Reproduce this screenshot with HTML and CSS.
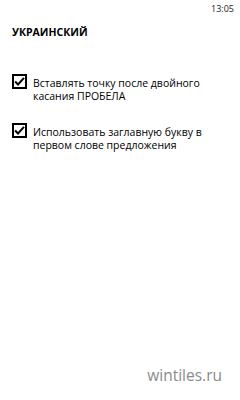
FILE: index.html
```html
<!DOCTYPE html>
<html lang="ru">
<head>
    <meta charset="UTF-8">
    <meta name="viewport" content="width=device-width, initial-scale=1.0">
    <title>Украинский</title>
    <link rel="stylesheet" href="styles.css">
</head>
<body>
    <main class="screen">
        <div class="statusbar">
            <span class="time">13:05</span>
        </div>
        <h1 class="title">УКРАИНСКИЙ</h1>

        <div class="options">
            <label class="option">
                <span class="box">
                    <svg viewBox="0 0 12 12"><path d="M1.2 6 L4.4 9.2 L10.9 2.1" fill="none" stroke="#000" stroke-width="2.2"/></svg>
                </span>
                <span class="text">Вставлять точку после двойного касания ПРОБЕЛА</span>
            </label>
            <label class="option">
                <span class="box">
                    <svg viewBox="0 0 12 12"><path d="M1.2 6 L4.4 9.2 L10.9 2.1" fill="none" stroke="#000" stroke-width="2.2"/></svg>
                </span>
                <span class="text">Использовать заглавную букву в первом слове предложения</span>
            </label>
        </div>

        <div class="watermark">wintiles.ru</div>
    </main>
</body>
</html>
```

FILE: styles.css
```css
* {
    margin: 0;
    box-sizing: border-box;
}
body {
    background: #fff;
    font-family: "Open Sans", "Noto Sans", sans-serif;
    color: #000;
}
.screen {
    width: 240px;
    height: 400px;
    display: flex;
    flex-direction: column;
}
.statusbar {
    height: 16px;
    display: flex;
    justify-content: flex-end;
    align-items: center;
    padding-right: 6px;
}
.time {
    font-size: 9px;
    color: #222;
}
.title {
    font-size: 10.5px;
    font-weight: 700;
    margin: 9px 0 0 12px;
    line-height: 14px;
}
.options {
    margin-top: 35px;
    display: flex;
    flex-direction: column;
    gap: 20px;
    padding-left: 12px;
}
.option {
    display: flex;
    align-items: flex-start;
    gap: 6px;
}
.box {
    width: 15px;
    height: 15px;
    border: 2px solid #000;
    flex: none;
    display: flex;
    align-items: center;
    justify-content: center;
}
.box svg {
    width: 11px;
    height: 11px;
}
.text {
    font-size: 10.5px;
    line-height: 13px;
    width: 175px;
    padding-top: 3px;
}
.watermark {
    margin-top: auto;
    margin-bottom: 14px;
    align-self: flex-end;
    margin-right: 18px;
    font-size: 15.5px;
    color: #8a8a8a;
}
```
